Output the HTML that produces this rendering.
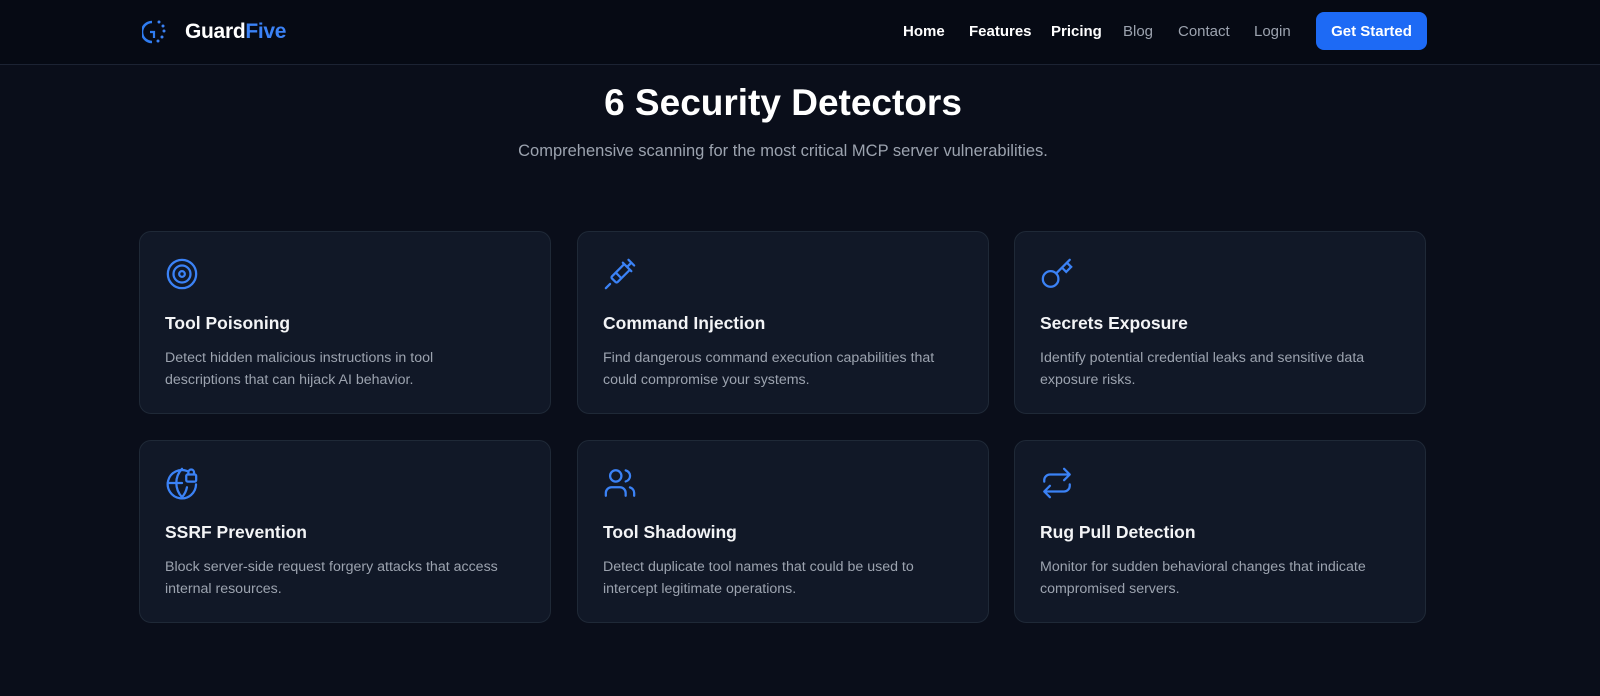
<!DOCTYPE html>
<html><head><meta charset="utf-8"><style>
*{margin:0;padding:0;box-sizing:border-box}
body{width:1600px;height:696px;background:#0a0e1a;font-family:"Liberation Sans",sans-serif;color:#fff;overflow:hidden;position:relative}
nav{position:absolute;left:0;top:0;width:1600px;height:65px;background:#060a14;border-bottom:1px solid #1c2333}
.logo{position:absolute;left:142px;top:18px}
.brand{position:absolute;left:185px;top:20px;font-size:21px;font-weight:bold;letter-spacing:-0.3px}
.brand span{color:#3b82f6}
.links a{position:absolute;top:23px;font-size:15px;color:#9ca3af;text-decoration:none}
.links a.b{color:#fff;font-weight:bold}
.btn{position:absolute;left:1316px;top:12px;width:111px;height:38px;background:#1d6af5;border-radius:8px;color:#fff;font-weight:bold;font-size:15px;text-align:center;line-height:40px}
h1{position:absolute;top:82px;left:0;width:1566px;text-align:center;font-size:37px;font-weight:bold}
.sub{position:absolute;top:142px;left:0;width:1566px;text-align:center;font-size:16.5px;color:#9ca3af}
.card{position:absolute;width:412px;height:183px;background:#111827;border:1px solid #1f2937;border-radius:12px}
.card svg{position:absolute;left:25px;top:25px}
.card h3{position:absolute;left:25px;top:81px;font-size:17.5px;font-weight:bold;color:#f3f4f6}
.card p{position:absolute;left:25px;top:115px;width:338px;font-size:14.2px;line-height:22px;color:#9ca3af}
</style></head><body>
<nav>
<svg class="logo" width="28" height="28" viewBox="0 0 28 28"><path d="M10 4 A10 10 0 0 0 10 24" fill="none" stroke="#2f7cf0" stroke-width="2.5"/><path d="M8 14h4v6" fill="none" stroke="#2f7cf0" stroke-width="2.2"/><circle cx="17" cy="4" r="1.5" fill="#3b82f6"/><circle cx="21" cy="8" r="1.5" fill="#3b82f6"/><circle cx="22" cy="13" r="1.5" fill="#3b82f6"/><circle cx="20" cy="19" r="1.5" fill="#3b82f6"/><circle cx="16" cy="23" r="1.5" fill="#3b82f6"/></svg>
<div class="brand">Guard<span>Five</span></div>
<div class="links">
<a class="b" style="left:903px">Home</a><a class="b" style="left:969px">Features</a><a class="b" style="left:1051px">Pricing</a><a style="left:1123px">Blog</a><a style="left:1178px">Contact</a><a style="left:1254px">Login</a>
</div>
<div class="btn">Get Started</div>
</nav>
<h1>6 Security Detectors</h1>
<div class="sub">Comprehensive scanning for the most critical MCP server vulnerabilities.</div>

<div class="card" style="left:139px;top:231px">
<svg width="34" height="34" viewBox="0 0 24 24" fill="none" stroke="#3b82f6" stroke-width="1.6"><circle cx="12" cy="12" r="10"/><circle cx="12" cy="12" r="6"/><circle cx="12" cy="12" r="2"/></svg>
<h3>Tool Poisoning</h3><p>Detect hidden malicious instructions in tool descriptions that can hijack AI behavior.</p></div>
<div class="card" style="left:577px;top:231px">
<svg width="34" height="34" viewBox="0 0 24 24" fill="none" stroke="#3b82f6" stroke-width="1.6" stroke-linecap="round"><path d="M18 2l4 4M17 7l3-3M19 9l-8.7 8.7a1 1 0 0 1-1.4 0L6.3 15.1a1 1 0 0 1 0-1.4L15 5M9 11l4 4M5 19l-3 3M14 4l6 6"/></svg>
<h3>Command Injection</h3><p>Find dangerous command execution capabilities that could compromise your systems.</p></div>
<div class="card" style="left:1014px;top:231px">
<svg width="34" height="34" viewBox="0 0 24 24" fill="none" stroke="#3b82f6" stroke-width="1.6" stroke-linecap="round"><circle cx="7.5" cy="15.5" r="5.5"/><path d="M21 2l-9.6 9.6M15.5 7.5l3 3L22 7l-3-3"/></svg>
<h3>Secrets Exposure</h3><p>Identify potential credential leaks and sensitive data exposure risks.</p></div>

<div class="card" style="left:139px;top:440px">
<svg width="34" height="34" viewBox="0 0 24 24" fill="none" stroke="#3b82f6" stroke-width="1.6" stroke-linecap="round"><path d="M15.7 3.6A10 10 0 1 0 21.9 13"/><path d="M2 12h10M12 2a14.5 14.5 0 0 0 0 20 14.5 14.5 0 0 0 3.5-7"/><rect x="15" y="6" width="7" height="5" rx="1"/><path d="M16.5 6V4.5a2 2 0 0 1 4 0V6"/></svg>
<h3>SSRF Prevention</h3><p>Block server-side request forgery attacks that access internal resources.</p></div>
<div class="card" style="left:577px;top:440px">
<svg width="34" height="34" viewBox="0 0 24 24" fill="none" stroke="#3b82f6" stroke-width="1.6" stroke-linecap="round"><path d="M16 21v-2a4 4 0 0 0-4-4H6a4 4 0 0 0-4 4v2"/><circle cx="9" cy="7" r="4"/><path d="M22 21v-2a4 4 0 0 0-3-3.9M16 3.1a4 4 0 0 1 0 7.8"/></svg>
<h3>Tool Shadowing</h3><p>Detect duplicate tool names that could be used to intercept legitimate operations.</p></div>
<div class="card" style="left:1014px;top:440px">
<svg width="34" height="34" viewBox="0 0 24 24" fill="none" stroke="#3b82f6" stroke-width="1.6" stroke-linecap="round" stroke-linejoin="round"><path d="M17 2l4 4-4 4M3 11v-1a4 4 0 0 1 4-4h14M7 22l-4-4 4-4M21 13v1a4 4 0 0 1-4 4H3"/></svg>
<h3>Rug Pull Detection</h3><p>Monitor for sudden behavioral changes that indicate compromised servers.</p></div>
</body></html>
